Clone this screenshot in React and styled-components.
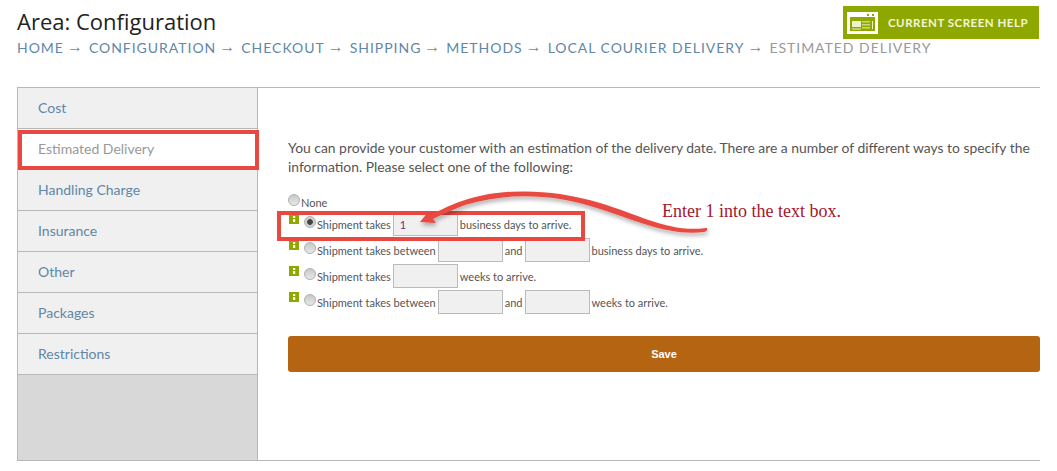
import React from 'react'
import styled, { createGlobalStyle } from 'styled-components'

const GlobalStyle = createGlobalStyle`
html, body {
    margin: 0;
    padding: 0;
    background: #fff;
}
body {
    font-family: 'Lato', sans-serif;
    color: #555;
}
`

const Page = styled.div`
position: relative;
width: 1057px;
height: 471px;
overflow: hidden;
box-sizing: border-box;
padding: 6px 17px 0;
`

const Header = styled.div`
display: flex;
justify-content: space-between;
align-items: flex-start;
height: 32px;
padding-right: 1px;
`

const Title = styled.h1`
margin: 1px 0 0;
font-family: 'Open Sans', sans-serif;
font-size: 22px;
line-height: 28px;
font-weight: 400;
color: #222;
`

const HelpButton = styled.a`
display: flex;
align-items: center;
gap: 10px;
box-sizing: border-box;
width: 196px;
height: 33px;
padding-left: 4px;
background: #8fa800;
color: #f2f5d8;
font-size: 11.5px;
font-weight: 700;
letter-spacing: 0.5px;
white-space: nowrap;
`

const Crumbs = styled.div`
display: flex;
align-items: center;
height: 20px;
margin-top: -1px;
font-size: 14px;
letter-spacing: 0.97px;
text-transform: uppercase;
white-space: nowrap;
`

const Crumb = styled.span`
color: ${p => (p.$current ? '#999' : '#5f87a8')};
`

const Sep = styled.span`
color: #888;
margin: 0 6px 0 3px;
font-family: 'Liberation Sans', sans-serif;
font-size: 16px;
letter-spacing: 0;
`

const Panel = styled.div`
display: flex;
width: 1023px;
height: 374px;
margin-top: 30px;
box-sizing: border-box;
border-top: 1px solid #b8b8b8;
border-bottom: 1px solid #b8b8b8;
`

const Side = styled.nav`
width: 241px;
flex: none;
box-sizing: border-box;
background: #d8d8d8;
border-left: 1px solid #b8b8b8;
border-right: 1px solid #b8b8b8;
`

const SideItem = styled.div`
box-sizing: border-box;
height: 41px;
padding-left: 20px;
line-height: 39px;
font-size: 14px;
background: ${p => (p.$active ? '#fff' : '#f0f0f0')};
color: ${p => (p.$active ? '#999' : '#5f87a8')};
border-bottom: 1px solid #b8b8b8;
`

const Content = styled.div`
flex: 1;
padding: 50px 0 0 30px;
`

const Intro = styled.p`
margin: 0 0 17px;
font-size: 13.88px;
line-height: 19px;
color: #555;
`

const Options = styled.div`
display: flex;
flex-direction: column;
font-size: 11px;
color: #555;
`

const Row = styled.div`
display: flex;
align-items: center;
height: ${p => (p.$short ? '18px' : '26px')};
`

const Info = styled.svg`
width: 10px;
height: 10px;
flex: none;
margin: -10px 5px 0 1px;
`

const Radio = styled.span`
display: inline-block;
flex: none;
box-sizing: border-box;
width: 12px;
height: 12px;
margin: -5px 1px 0 0;
border-radius: 50%;
border: 1px solid #b0b0b0;
background: ${p => (p.$checked
    ? 'radial-gradient(circle, #444 0 2.5px, #d0d0d0 3.2px)'
    : 'linear-gradient(#c8c8c8, #e8e8e8)')};
`

const Label = styled.span`
margin: 0 2px 0 0;
white-space: nowrap;
`

const Field = styled.input`
box-sizing: border-box;
width: 65px;
height: 24px;
margin: 0 2px 0 0;
padding: 0 6px;
border: 1px solid #bbb;
background: #f0f0f0;
font: 11px 'Lato', sans-serif;
color: #7a2a7a;
outline: none;
`

const SaveButton = styled.button`
display: block;
width: 752px;
height: 36px;
margin-top: 21px;
border: none;
border-radius: 3px;
background: #b56411;
color: #fff;
font-family: 'Liberation Sans', sans-serif;
font-size: 11px;
font-weight: 700;
`

const Callout = styled.div`
position: absolute;
box-sizing: border-box;
border: 4px solid #e8483f;
left: ${p => p.$x}px;
top: ${p => p.$y}px;
width: ${p => p.$w}px;
height: ${p => p.$h}px;
`

const Note = styled.div`
position: absolute;
left: 662px;
top: 200px;
font-family: 'Liberation Serif', serif;
font-size: 18px;
line-height: 22px;
color: #a3182c;
white-space: nowrap;
`

const Arrow = styled.svg`
position: absolute;
left: 0;
top: 0;
pointer-events: none;
`

const HelpIcon = () => (
    <svg width="31" height="22" viewBox="0 0 31 22">
        <rect width="31" height="22" fill="#fff" />
        <rect x="3" y="5" width="25" height="14" fill="#8fa800" />
        <rect x="20" y="2" width="2" height="2" fill="#8fa800" />
        <rect x="25" y="2" width="2" height="2" fill="#8fa800" />
        <rect x="5" y="9" width="9" height="6" fill="#eef3c8" />
        <rect x="15" y="9" width="8" height="1.5" fill="#c9d97a" />
        <rect x="15" y="12" width="8" height="1.5" fill="#c9d97a" />
        <rect x="15" y="15" width="8" height="1.5" fill="#c9d97a" />
        <rect x="25" y="9" width="1" height="8" fill="#eef3c8" />
        <rect x="5" y="16.5" width="9" height="1" fill="#eef3c8" />
    </svg>
)

const InfoIcon = () => (
    <Info viewBox="0 0 10 10">
        <rect width="10" height="10" fill="#8fa800" />
        <rect x="4" y="2" width="2.2" height="2" fill="#fff" />
        <rect x="4" y="5" width="2.2" height="3" fill="#fff" />
    </Info>
)

const crumbs = ['Home', 'Configuration', 'Checkout', 'Shipping', 'Methods', 'Local Courier Delivery']
const sideItems = ['Cost', 'Estimated Delivery', 'Handling Charge', 'Insurance', 'Other', 'Packages', 'Restrictions']

const App = () => {
    return (
        <Page>
            <GlobalStyle />
            <Header>
                <Title>Area: Configuration</Title>
                <HelpButton>
                    <HelpIcon />
                    CURRENT SCREEN HELP
                </HelpButton>
            </Header>
            <Crumbs>
                {crumbs.map(c => (
                    <React.Fragment key={c}>
                        <Crumb>{c}</Crumb>
                        <Sep>→</Sep>
                    </React.Fragment>
                ))}
                <Crumb $current>Estimated Delivery</Crumb>
            </Crumbs>
            <Panel>
                <Side>
                    {sideItems.map(s => (
                        <SideItem key={s} $active={s === 'Estimated Delivery'}>{s}</SideItem>
                    ))}
                </Side>
                <Content>
                    <Intro>
                        You can provide your customer with an estimation of the delivery date. There are a number of different ways to specify the information. Please select one of the following:
                    </Intro>
                    <Options>
                        <Row $short>
                            <Radio />
                            <Label>None</Label>
                        </Row>
                        <Row>
                            <InfoIcon />
                            <Radio $checked />
                            <Label>Shipment takes</Label>
                            <Field defaultValue="1" />
                            <Label>business days to arrive.</Label>
                        </Row>
                        <Row>
                            <InfoIcon />
                            <Radio />
                            <Label>Shipment takes between</Label>
                            <Field />
                            <Label>and</Label>
                            <Field />
                            <Label>business days to arrive.</Label>
                        </Row>
                        <Row>
                            <InfoIcon />
                            <Radio />
                            <Label>Shipment takes</Label>
                            <Field />
                            <Label>weeks to arrive.</Label>
                        </Row>
                        <Row>
                            <InfoIcon />
                            <Radio />
                            <Label>Shipment takes between</Label>
                            <Field />
                            <Label>and</Label>
                            <Field />
                            <Label>weeks to arrive.</Label>
                        </Row>
                    </Options>
                    <SaveButton>Save</SaveButton>
                </Content>
            </Panel>

            <Callout $x={18} $y={130} $w={241} $h={40} />
            <Callout $x={277} $y={211} $w={308} $h={30} />
            <Arrow width="1057" height="471" viewBox="0 0 1057 471">
                <defs>
                    <filter id="arrowShadow" x="-10%" y="-30%" width="120%" height="170%">
                        <feDropShadow dx="1" dy="3" stdDeviation="2" floodColor="#000" floodOpacity="0.3" />
                    </filter>
                </defs>
                <path
                    d="M706 228 C 670 233 640 215 600 203 C 550 188 500 188 462 201 C 448 206 438 211 431 215 L 429 211 L 420 222 L 436 223 L 433 219 C 445 213 455 209 465 205 C 505 193 550 193 597 208 C 640 222 670 236 704 232 C 708 231 708 228 706 228 Z"
                    fill="#e8483f"
                    filter="url(#arrowShadow)"
                />
            </Arrow>
            <Note>Enter 1 into the text box.</Note>
        </Page>
    )
}

export default App
